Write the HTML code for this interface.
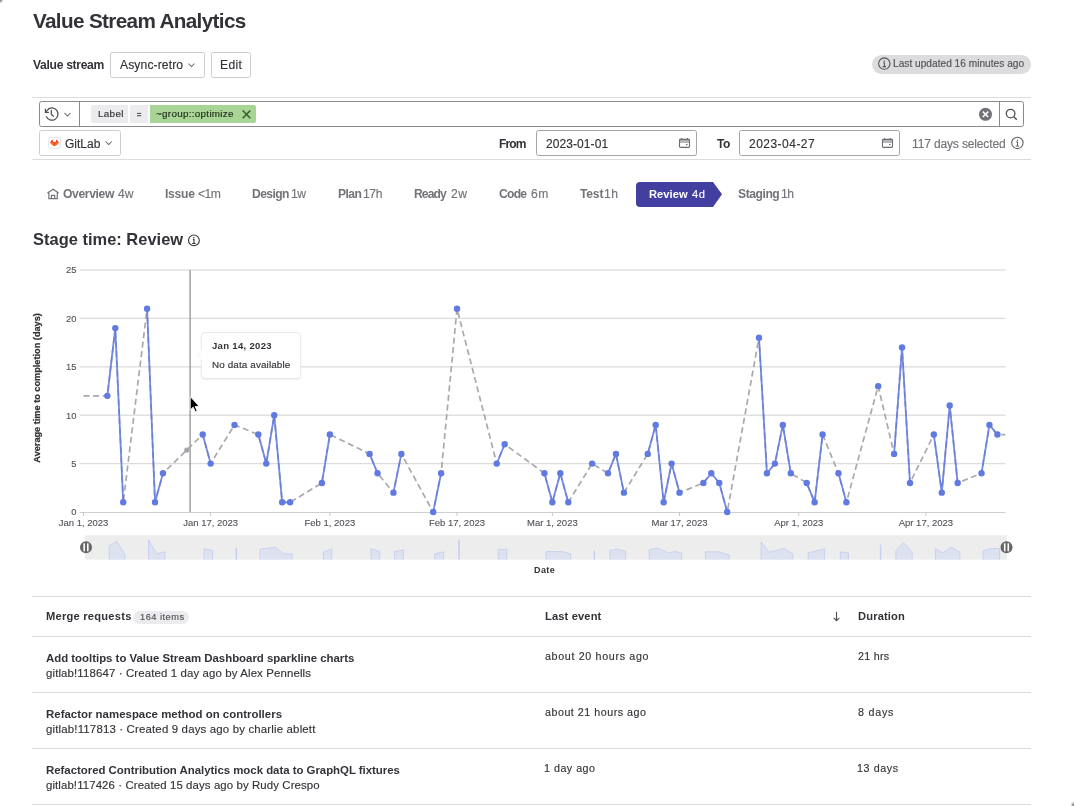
<!DOCTYPE html><html><head><meta charset="utf-8"><style>
html,body{margin:0;padding:0;background:#fff;width:1074px;height:806px;overflow:hidden;position:relative;font-family:'Liberation Sans', sans-serif}
.t{position:absolute;white-space:pre;line-height:1;will-change:transform;font-family:'Liberation Sans', sans-serif}
.r{-webkit-text-stroke:0.15px currentColor}
svg{position:absolute;overflow:visible;will-change:transform}
</style></head><body>
<div style="position:absolute;left:110px;top:52px;width:95px;height:26px;box-sizing:border-box;border:1px solid #cdcdd1;border-radius:2.5px;background:#fff"></div>
<div style="position:absolute;left:211px;top:52px;width:40px;height:26px;box-sizing:border-box;border:1px solid #cdcdd1;border-radius:2.5px;background:#fff"></div>
<div style="position:absolute;left:872px;top:55px;width:159px;height:19px;box-sizing:border-box;border-radius:10px;background:#dcdcde"></div>
<div style="position:absolute;left:32px;top:97px;width:999px;height:1px;box-sizing:border-box;background:#dcdcde"></div>
<div style="position:absolute;left:39px;top:101px;width:985px;height:26px;box-sizing:border-box;border:1px solid #89888d;border-radius:2.5px;background:#fff"></div>
<div style="position:absolute;left:79px;top:101px;width:1px;height:26px;box-sizing:border-box;background:#89888d"></div>
<div style="position:absolute;left:999px;top:101px;width:1px;height:26px;box-sizing:border-box;background:#89888d"></div>
<div style="position:absolute;left:91px;top:105px;width:37px;height:18px;box-sizing:border-box;background:#ececef;border-radius:2px 0 0 2px"></div>
<div style="position:absolute;left:130px;top:105px;width:18px;height:18px;box-sizing:border-box;background:#ececef"></div>
<div style="position:absolute;left:150px;top:105px;width:106px;height:18px;box-sizing:border-box;background:#a8d595;border-radius:0 2px 2px 0"></div>
<div style="position:absolute;left:39px;top:130px;width:82px;height:26px;box-sizing:border-box;border:1px solid #cdcdd1;border-radius:2.5px;background:#fff"></div>
<div style="position:absolute;left:536px;top:130px;width:161px;height:26px;box-sizing:border-box;border:1px solid #a4a3a8;border-radius:2.5px;background:#fff"></div>
<div style="position:absolute;left:739px;top:130px;width:161px;height:26px;box-sizing:border-box;border:1px solid #a4a3a8;border-radius:2.5px;background:#fff"></div>
<div style="position:absolute;left:32px;top:159px;width:999px;height:1px;box-sizing:border-box;background:#dcdcde"></div>
<svg style="left:0;top:0" width="1074" height="806"><path d="M640 182 H713 L722 194.3 L713 207 H640 Q636 207 636 203 V186 Q636 182 640 182 Z" fill="#433fa0"/></svg>
<div style="position:absolute;left:32px;top:596px;width:999px;height:1px;box-sizing:border-box;background:#dcdcde"></div>
<div style="position:absolute;left:32px;top:636px;width:999px;height:1px;box-sizing:border-box;background:#dcdcde"></div>
<div style="position:absolute;left:32px;top:692px;width:999px;height:1px;box-sizing:border-box;background:#dcdcde"></div>
<div style="position:absolute;left:32px;top:748px;width:999px;height:1px;box-sizing:border-box;background:#dcdcde"></div>
<div style="position:absolute;left:32px;top:804px;width:999px;height:1px;box-sizing:border-box;background:#dcdcde"></div>
<div style="position:absolute;left:133px;top:611px;width:56px;height:13px;box-sizing:border-box;border-radius:7px;background:#ececef"></div>
<svg style="left:0;top:0" width="1074" height="806" font-family="Liberation Sans, sans-serif">
<rect x="79.5" y="462.95" width="926" height="1.3" fill="#dcdcdd"/>
<rect x="79.5" y="414.55" width="926" height="1.3" fill="#dcdcdd"/>
<rect x="79.5" y="366.15" width="926" height="1.3" fill="#dcdcdd"/>
<rect x="79.5" y="317.75" width="926" height="1.3" fill="#dcdcdd"/>
<rect x="79.5" y="269.35" width="926" height="1.3" fill="#dcdcdd"/>
<rect x="79.5" y="512.00" width="926" height="1" fill="#cfcfd2"/>
<text x="76.5" y="515.40" font-size="9.4" fill="#535158" stroke="#535158" stroke-width="0.12" text-anchor="end">0</text>
<text x="76.5" y="467.00" font-size="9.4" fill="#535158" stroke="#535158" stroke-width="0.12" text-anchor="end">5</text>
<text x="76.5" y="418.60" font-size="9.4" fill="#535158" stroke="#535158" stroke-width="0.12" text-anchor="end">10</text>
<text x="76.5" y="370.20" font-size="9.4" fill="#535158" stroke="#535158" stroke-width="0.12" text-anchor="end">15</text>
<text x="76.5" y="321.80" font-size="9.4" fill="#535158" stroke="#535158" stroke-width="0.12" text-anchor="end">20</text>
<text x="76.5" y="273.40" font-size="9.4" fill="#535158" stroke="#535158" stroke-width="0.12" text-anchor="end">25</text>
<rect x="83.00" y="512" width="1" height="4" fill="#c9c9cc"/>
<text x="83.50" y="525.9" font-size="9.5" fill="#535158" stroke="#535158" stroke-width="0.12" text-anchor="middle">Jan 1, 2023</text>
<rect x="210.15" y="512" width="1" height="4" fill="#c9c9cc"/>
<text x="210.65" y="525.9" font-size="9.5" fill="#535158" stroke="#535158" stroke-width="0.12" text-anchor="middle">Jan 17, 2023</text>
<rect x="329.36" y="512" width="1" height="4" fill="#c9c9cc"/>
<text x="329.86" y="525.9" font-size="9.5" fill="#535158" stroke="#535158" stroke-width="0.12" text-anchor="middle">Feb 1, 2023</text>
<rect x="456.51" y="512" width="1" height="4" fill="#c9c9cc"/>
<text x="457.01" y="525.9" font-size="9.5" fill="#535158" stroke="#535158" stroke-width="0.12" text-anchor="middle">Feb 17, 2023</text>
<rect x="551.87" y="512" width="1" height="4" fill="#c9c9cc"/>
<text x="552.37" y="525.9" font-size="9.5" fill="#535158" stroke="#535158" stroke-width="0.12" text-anchor="middle">Mar 1, 2023</text>
<rect x="679.02" y="512" width="1" height="4" fill="#c9c9cc"/>
<text x="679.52" y="525.9" font-size="9.5" fill="#535158" stroke="#535158" stroke-width="0.12" text-anchor="middle">Mar 17, 2023</text>
<rect x="798.23" y="512" width="1" height="4" fill="#c9c9cc"/>
<text x="798.73" y="525.9" font-size="9.5" fill="#535158" stroke="#535158" stroke-width="0.12" text-anchor="middle">Apr 1, 2023</text>
<rect x="925.38" y="512" width="1" height="4" fill="#c9c9cc"/>
<text x="925.88" y="525.9" font-size="9.5" fill="#535158" stroke="#535158" stroke-width="0.12" text-anchor="middle">Apr 17, 2023</text>
<text transform="translate(40.2 387.9) rotate(-90)" font-size="9.2" font-weight="700" fill="#333238" stroke="#333238" stroke-width="0.25" text-anchor="middle" textLength="149.5" lengthAdjust="spacingAndGlyphs">Average time to completion (days)</text>
<rect x="189.5" y="270" width="1.2" height="242" fill="#89888d"/>
<polyline points="83.50,395.84 107.34,395.84 115.29,328.08 123.23,502.32 147.08,308.72 155.02,502.32 162.97,473.28 202.70,434.56 210.65,463.60 234.49,424.88 258.33,434.56 266.28,463.60 274.23,415.20 282.18,502.32 290.12,502.32 321.91,482.96 329.86,434.56 369.59,453.92 377.54,473.28 393.43,492.64 401.38,453.92 433.17,512.00 441.12,473.28 457.01,308.72 496.74,463.60 504.69,444.24 544.43,473.28 552.37,502.32 560.32,473.28 568.27,502.32 592.11,463.60 608.00,473.28 615.95,453.92 623.90,492.64 647.74,453.92 655.68,424.88 663.63,502.32 671.58,463.60 679.52,492.64 703.37,482.96 711.31,473.28 719.26,482.96 727.21,512.00 759.00,337.76 766.94,473.28 774.89,463.60 782.84,424.88 790.78,473.28 806.68,482.96 814.62,502.32 822.57,434.56 838.47,473.28 846.41,502.32 878.20,386.16 894.09,453.92 902.04,347.44 909.99,482.96 933.83,434.56 941.78,492.64 949.72,405.52 957.67,482.96 981.51,473.28 989.46,424.88 997.40,434.56 1005.35,434.56" fill="none" stroke="#a4a3a8" stroke-width="1.7" stroke-dasharray="6 3.6" stroke-opacity="0.95"/>
<polyline points="107.34,395.84 115.29,328.08 123.23,502.32" fill="none" stroke="#617ae2" stroke-width="1.8" stroke-linejoin="round" stroke-opacity="0.88"/>
<polyline points="147.08,308.72 155.02,502.32 162.97,473.28" fill="none" stroke="#617ae2" stroke-width="1.8" stroke-linejoin="round" stroke-opacity="0.88"/>
<polyline points="202.70,434.56 210.65,463.60" fill="none" stroke="#617ae2" stroke-width="1.8" stroke-linejoin="round" stroke-opacity="0.88"/>
<polyline points="258.33,434.56 266.28,463.60 274.23,415.20 282.18,502.32 290.12,502.32" fill="none" stroke="#617ae2" stroke-width="1.8" stroke-linejoin="round" stroke-opacity="0.88"/>
<polyline points="321.91,482.96 329.86,434.56" fill="none" stroke="#617ae2" stroke-width="1.8" stroke-linejoin="round" stroke-opacity="0.88"/>
<polyline points="369.59,453.92 377.54,473.28" fill="none" stroke="#617ae2" stroke-width="1.8" stroke-linejoin="round" stroke-opacity="0.88"/>
<polyline points="393.43,492.64 401.38,453.92" fill="none" stroke="#617ae2" stroke-width="1.8" stroke-linejoin="round" stroke-opacity="0.88"/>
<polyline points="433.17,512.00 441.12,473.28" fill="none" stroke="#617ae2" stroke-width="1.8" stroke-linejoin="round" stroke-opacity="0.88"/>
<polyline points="496.74,463.60 504.69,444.24" fill="none" stroke="#617ae2" stroke-width="1.8" stroke-linejoin="round" stroke-opacity="0.88"/>
<polyline points="544.43,473.28 552.37,502.32 560.32,473.28 568.27,502.32" fill="none" stroke="#617ae2" stroke-width="1.8" stroke-linejoin="round" stroke-opacity="0.88"/>
<polyline points="608.00,473.28 615.95,453.92 623.90,492.64" fill="none" stroke="#617ae2" stroke-width="1.8" stroke-linejoin="round" stroke-opacity="0.88"/>
<polyline points="647.74,453.92 655.68,424.88 663.63,502.32 671.58,463.60 679.52,492.64" fill="none" stroke="#617ae2" stroke-width="1.8" stroke-linejoin="round" stroke-opacity="0.88"/>
<polyline points="703.37,482.96 711.31,473.28 719.26,482.96 727.21,512.00" fill="none" stroke="#617ae2" stroke-width="1.8" stroke-linejoin="round" stroke-opacity="0.88"/>
<polyline points="759.00,337.76 766.94,473.28 774.89,463.60 782.84,424.88 790.78,473.28" fill="none" stroke="#617ae2" stroke-width="1.8" stroke-linejoin="round" stroke-opacity="0.88"/>
<polyline points="806.68,482.96 814.62,502.32 822.57,434.56" fill="none" stroke="#617ae2" stroke-width="1.8" stroke-linejoin="round" stroke-opacity="0.88"/>
<polyline points="838.47,473.28 846.41,502.32" fill="none" stroke="#617ae2" stroke-width="1.8" stroke-linejoin="round" stroke-opacity="0.88"/>
<polyline points="894.09,453.92 902.04,347.44 909.99,482.96" fill="none" stroke="#617ae2" stroke-width="1.8" stroke-linejoin="round" stroke-opacity="0.88"/>
<polyline points="933.83,434.56 941.78,492.64 949.72,405.52 957.67,482.96" fill="none" stroke="#617ae2" stroke-width="1.8" stroke-linejoin="round" stroke-opacity="0.88"/>
<polyline points="981.51,473.28 989.46,424.88 997.40,434.56" fill="none" stroke="#617ae2" stroke-width="1.8" stroke-linejoin="round" stroke-opacity="0.88"/>
<circle cx="107.34" cy="395.84" r="3.2" fill="#617ae2"/>
<circle cx="115.29" cy="328.08" r="3.2" fill="#617ae2"/>
<circle cx="123.23" cy="502.32" r="3.2" fill="#617ae2"/>
<circle cx="147.08" cy="308.72" r="3.2" fill="#617ae2"/>
<circle cx="155.02" cy="502.32" r="3.2" fill="#617ae2"/>
<circle cx="162.97" cy="473.28" r="3.2" fill="#617ae2"/>
<circle cx="202.70" cy="434.56" r="3.2" fill="#617ae2"/>
<circle cx="210.65" cy="463.60" r="3.2" fill="#617ae2"/>
<circle cx="234.49" cy="424.88" r="3.2" fill="#617ae2"/>
<circle cx="258.33" cy="434.56" r="3.2" fill="#617ae2"/>
<circle cx="266.28" cy="463.60" r="3.2" fill="#617ae2"/>
<circle cx="274.23" cy="415.20" r="3.2" fill="#617ae2"/>
<circle cx="282.18" cy="502.32" r="3.2" fill="#617ae2"/>
<circle cx="290.12" cy="502.32" r="3.2" fill="#617ae2"/>
<circle cx="321.91" cy="482.96" r="3.2" fill="#617ae2"/>
<circle cx="329.86" cy="434.56" r="3.2" fill="#617ae2"/>
<circle cx="369.59" cy="453.92" r="3.2" fill="#617ae2"/>
<circle cx="377.54" cy="473.28" r="3.2" fill="#617ae2"/>
<circle cx="393.43" cy="492.64" r="3.2" fill="#617ae2"/>
<circle cx="401.38" cy="453.92" r="3.2" fill="#617ae2"/>
<circle cx="433.17" cy="512.00" r="3.2" fill="#617ae2"/>
<circle cx="441.12" cy="473.28" r="3.2" fill="#617ae2"/>
<circle cx="457.01" cy="308.72" r="3.2" fill="#617ae2"/>
<circle cx="496.74" cy="463.60" r="3.2" fill="#617ae2"/>
<circle cx="504.69" cy="444.24" r="3.2" fill="#617ae2"/>
<circle cx="544.43" cy="473.28" r="3.2" fill="#617ae2"/>
<circle cx="552.37" cy="502.32" r="3.2" fill="#617ae2"/>
<circle cx="560.32" cy="473.28" r="3.2" fill="#617ae2"/>
<circle cx="568.27" cy="502.32" r="3.2" fill="#617ae2"/>
<circle cx="592.11" cy="463.60" r="3.2" fill="#617ae2"/>
<circle cx="608.00" cy="473.28" r="3.2" fill="#617ae2"/>
<circle cx="615.95" cy="453.92" r="3.2" fill="#617ae2"/>
<circle cx="623.90" cy="492.64" r="3.2" fill="#617ae2"/>
<circle cx="647.74" cy="453.92" r="3.2" fill="#617ae2"/>
<circle cx="655.68" cy="424.88" r="3.2" fill="#617ae2"/>
<circle cx="663.63" cy="502.32" r="3.2" fill="#617ae2"/>
<circle cx="671.58" cy="463.60" r="3.2" fill="#617ae2"/>
<circle cx="679.52" cy="492.64" r="3.2" fill="#617ae2"/>
<circle cx="703.37" cy="482.96" r="3.2" fill="#617ae2"/>
<circle cx="711.31" cy="473.28" r="3.2" fill="#617ae2"/>
<circle cx="719.26" cy="482.96" r="3.2" fill="#617ae2"/>
<circle cx="727.21" cy="512.00" r="3.2" fill="#617ae2"/>
<circle cx="759.00" cy="337.76" r="3.2" fill="#617ae2"/>
<circle cx="766.94" cy="473.28" r="3.2" fill="#617ae2"/>
<circle cx="774.89" cy="463.60" r="3.2" fill="#617ae2"/>
<circle cx="782.84" cy="424.88" r="3.2" fill="#617ae2"/>
<circle cx="790.78" cy="473.28" r="3.2" fill="#617ae2"/>
<circle cx="806.68" cy="482.96" r="3.2" fill="#617ae2"/>
<circle cx="814.62" cy="502.32" r="3.2" fill="#617ae2"/>
<circle cx="822.57" cy="434.56" r="3.2" fill="#617ae2"/>
<circle cx="838.47" cy="473.28" r="3.2" fill="#617ae2"/>
<circle cx="846.41" cy="502.32" r="3.2" fill="#617ae2"/>
<circle cx="878.20" cy="386.16" r="3.2" fill="#617ae2"/>
<circle cx="894.09" cy="453.92" r="3.2" fill="#617ae2"/>
<circle cx="902.04" cy="347.44" r="3.2" fill="#617ae2"/>
<circle cx="909.99" cy="482.96" r="3.2" fill="#617ae2"/>
<circle cx="933.83" cy="434.56" r="3.2" fill="#617ae2"/>
<circle cx="941.78" cy="492.64" r="3.2" fill="#617ae2"/>
<circle cx="949.72" cy="405.52" r="3.2" fill="#617ae2"/>
<circle cx="957.67" cy="482.96" r="3.2" fill="#617ae2"/>
<circle cx="981.51" cy="473.28" r="3.2" fill="#617ae2"/>
<circle cx="989.46" cy="424.88" r="3.2" fill="#617ae2"/>
<circle cx="997.40" cy="434.56" r="3.2" fill="#617ae2"/>
<circle cx="186.81" cy="450.05" r="2.6" fill="#a4a3a8"/>
<rect x="85" y="535.3" width="922" height="24.3" fill="#ededee"/>
<path d="M109.2,559.6 L109.2,545.9 L116.7,541.2 L125.0,554.2 L125.0,559.6 Z" fill="#dde2f1"/>
<path d="M109.2,559.6 L109.2,545.9 L116.7,541.2 L125.0,554.2 L125.0,559.6" fill="none" stroke="#c3ccef" stroke-width="0.8"/>
<path d="M148.5,559.6 L148.5,539.8 L156.9,553.8 L164.9,551.8 L164.9,559.6 Z" fill="#dde2f1"/>
<path d="M148.5,559.6 L148.5,539.8 L156.9,553.8 L164.9,551.8 L164.9,559.6" fill="none" stroke="#c3ccef" stroke-width="0.8"/>
<path d="M204.0,559.6 L204.0,548.8 L212.6,550.3 L212.6,559.6 Z" fill="#dde2f1"/>
<path d="M204.0,559.6 L204.0,548.8 L212.6,550.3 L212.6,559.6" fill="none" stroke="#c3ccef" stroke-width="0.8"/>
<path d="M236.1,559.6 L236.1,547.9 L236.6,547.9 L236.6,559.6 Z" fill="#dde2f1"/>
<path d="M236.1,559.6 L236.1,547.9 L236.6,547.9 L236.6,559.6" fill="none" stroke="#c3ccef" stroke-width="0.8"/>
<path d="M260.0,559.6 L260.0,549.0 L275.2,547.3 L284.1,553.8 L292.2,553.8 L292.2,559.6 Z" fill="#dde2f1"/>
<path d="M260.0,559.6 L260.0,549.0 L275.2,547.3 L284.1,553.8 L292.2,553.8 L292.2,559.6" fill="none" stroke="#c3ccef" stroke-width="0.8"/>
<path d="M323.4,559.6 L323.4,552.3 L331.8,548.8 L331.8,559.6 Z" fill="#dde2f1"/>
<path d="M323.4,559.6 L323.4,552.3 L331.8,548.8 L331.8,559.6" fill="none" stroke="#c3ccef" stroke-width="0.8"/>
<path d="M371.1,559.6 L371.1,548.8 L379.8,551.5 L379.8,559.6 Z" fill="#dde2f1"/>
<path d="M371.1,559.6 L371.1,548.8 L379.8,551.5 L379.8,559.6" fill="none" stroke="#c3ccef" stroke-width="0.8"/>
<path d="M394.5,559.6 L394.5,551.5 L403.4,550.0 L403.4,559.6 Z" fill="#dde2f1"/>
<path d="M394.5,559.6 L394.5,551.5 L403.4,550.0 L403.4,559.6" fill="none" stroke="#c3ccef" stroke-width="0.8"/>
<path d="M434.7,559.6 L434.7,553.8 L443.6,551.8 L443.6,559.6 Z" fill="#dde2f1"/>
<path d="M434.7,559.6 L434.7,553.8 L443.6,551.8 L443.6,559.6" fill="none" stroke="#c3ccef" stroke-width="0.8"/>
<path d="M458.8,559.6 L458.8,539.8 L459.3,539.8 L459.3,559.6 Z" fill="#dde2f1"/>
<path d="M458.8,559.6 L458.8,539.8 L459.3,539.8 L459.3,559.6" fill="none" stroke="#c3ccef" stroke-width="0.8"/>
<path d="M498.2,559.6 L498.2,549.9 L506.8,549.0 L506.8,559.6 Z" fill="#dde2f1"/>
<path d="M498.2,559.6 L498.2,549.9 L506.8,549.0 L506.8,559.6" fill="none" stroke="#c3ccef" stroke-width="0.8"/>
<path d="M546.1,559.6 L546.1,551.5 L561.3,551.5 L570.6,553.8 L570.6,559.6 Z" fill="#dde2f1"/>
<path d="M546.1,559.6 L546.1,551.5 L561.3,551.5 L570.6,553.8 L570.6,559.6" fill="none" stroke="#c3ccef" stroke-width="0.8"/>
<path d="M594.1,559.6 L594.1,551.0 L594.6,551.0 L594.6,559.6 Z" fill="#dde2f1"/>
<path d="M594.1,559.6 L594.1,551.0 L594.6,551.0 L594.6,559.6" fill="none" stroke="#c3ccef" stroke-width="0.8"/>
<path d="M609.9,559.6 L609.9,550.3 L617.4,549.0 L625.7,551.5 L625.7,559.6 Z" fill="#dde2f1"/>
<path d="M609.9,559.6 L609.9,550.3 L617.4,549.0 L625.7,551.5 L625.7,559.6" fill="none" stroke="#c3ccef" stroke-width="0.8"/>
<path d="M649.2,559.6 L649.2,549.9 L657.3,547.9 L668.6,553.0 L674.6,551.5 L681.7,553.0 L681.7,559.6 Z" fill="#dde2f1"/>
<path d="M649.2,559.6 L649.2,549.9 L657.3,547.9 L668.6,553.0 L674.6,551.5 L681.7,553.0 L681.7,559.6" fill="none" stroke="#c3ccef" stroke-width="0.8"/>
<path d="M705.4,559.6 L705.4,551.8 L719.4,551.8 L729.2,555.3 L729.2,559.6 Z" fill="#dde2f1"/>
<path d="M705.4,559.6 L705.4,551.8 L719.4,551.8 L729.2,555.3 L729.2,559.6" fill="none" stroke="#c3ccef" stroke-width="0.8"/>
<path d="M761.1,559.6 L761.1,541.9 L769.1,552.3 L784.3,548.5 L792.7,553.8 L792.7,559.6 Z" fill="#dde2f1"/>
<path d="M761.1,559.6 L761.1,541.9 L769.1,552.3 L784.3,548.5 L792.7,553.8 L792.7,559.6" fill="none" stroke="#c3ccef" stroke-width="0.8"/>
<path d="M808.2,559.6 L808.2,552.9 L824.6,548.8 L824.6,559.6 Z" fill="#dde2f1"/>
<path d="M808.2,559.6 L808.2,552.9 L824.6,548.8 L824.6,559.6" fill="none" stroke="#c3ccef" stroke-width="0.8"/>
<path d="M840.3,559.6 L840.3,551.8 L848.4,553.0 L848.4,559.6 Z" fill="#dde2f1"/>
<path d="M840.3,559.6 L840.3,551.8 L848.4,553.0 L848.4,559.6" fill="none" stroke="#c3ccef" stroke-width="0.8"/>
<path d="M880.3,559.6 L880.3,544.9 L880.8,544.9 L880.8,559.6 Z" fill="#dde2f1"/>
<path d="M880.3,559.6 L880.3,544.9 L880.8,544.9 L880.8,559.6" fill="none" stroke="#c3ccef" stroke-width="0.8"/>
<path d="M895.8,559.6 L895.8,550.9 L903.5,542.5 L912.2,552.3 L912.2,559.6 Z" fill="#dde2f1"/>
<path d="M895.8,559.6 L895.8,550.9 L903.5,542.5 L912.2,552.3 L912.2,559.6" fill="none" stroke="#c3ccef" stroke-width="0.8"/>
<path d="M935.4,559.6 L935.4,548.8 L942.8,553.0 L951.2,547.0 L959.8,552.3 L959.8,559.6 Z" fill="#dde2f1"/>
<path d="M935.4,559.6 L935.4,548.8 L942.8,553.0 L951.2,547.0 L959.8,552.3 L959.8,559.6" fill="none" stroke="#c3ccef" stroke-width="0.8"/>
<path d="M983.1,559.6 L983.1,550.9 L991.4,548.5 L999.5,548.5 L999.5,559.6 Z" fill="#dde2f1"/>
<path d="M983.1,559.6 L983.1,550.9 L991.4,548.5 L999.5,548.5 L999.5,559.6" fill="none" stroke="#c3ccef" stroke-width="0.8"/>
<circle cx="86.0" cy="547.3" r="6" fill="#666"/><rect x="83.4" y="543.3" width="1.6" height="8" fill="#fff"/><rect x="87.0" y="543.3" width="1.6" height="8" fill="#fff"/>
<circle cx="1006.5" cy="547.3" r="6" fill="#666"/><rect x="1003.9" y="543.3" width="1.6" height="8" fill="#fff"/><rect x="1007.5" y="543.3" width="1.6" height="8" fill="#fff"/>
</svg>
<div style="position:absolute;left:201px;top:332px;width:100px;height:47px;box-sizing:border-box;border:1px solid #e9e9ec;border-radius:4px;background:#fff;box-shadow:0 1px 1.5px rgba(0,0,0,0.07)"></div>
<div class="t" style="left:32.60px;top:10.86px;font-size:20.71px;letter-spacing:-0.657px;font-weight:700;color:#333238">Value Stream Analytics</div>
<div class="t" style="left:33.30px;top:59.32px;font-size:12.14px;letter-spacing:-0.318px;font-weight:700;color:#333238">Value stream</div>
<div class="t r" style="left:120.00px;top:59.32px;font-size:12.14px;letter-spacing:0.110px;color:#333238">Async-retro</div>
<div class="t r" style="left:220.20px;top:59.32px;font-size:12.14px;letter-spacing:0.300px;color:#333238">Edit</div>
<div class="t r" style="left:893.40px;top:59.01px;font-size:10.14px;letter-spacing:0.019px;color:#535158">Last updated 16 minutes ago</div>
<div class="t r" style="left:97.50px;top:109.15px;font-size:9.86px;letter-spacing:0.325px;color:#333238">Label</div>
<div class="t r" style="left:156.40px;top:109.15px;font-size:9.86px;letter-spacing:0.300px;color:#1f2b1c">~group::optimize</div>
<div class="t r" style="left:64.60px;top:137.64px;font-size:12.00px;letter-spacing:0.000px;color:#333238">GitLab</div>
<div class="t" style="left:498.90px;top:137.64px;font-size:12.00px;letter-spacing:-0.867px;font-weight:700;color:#333238">From</div>
<div class="t r" style="left:545.90px;top:137.64px;font-size:12.00px;letter-spacing:0.078px;color:#333238">2023-01-01</div>
<div class="t" style="left:716.50px;top:137.64px;font-size:12.00px;letter-spacing:-0.400px;font-weight:700;color:#333238">To</div>
<div class="t r" style="left:749.00px;top:137.64px;font-size:12.00px;letter-spacing:0.478px;color:#333238">2023-04-27</div>
<div class="t r" style="left:911.70px;top:137.64px;font-size:12.00px;letter-spacing:-0.138px;color:#737278">117 days selected</div>
<div class="t" style="left:62.80px;top:188.12px;font-size:12.14px;letter-spacing:-0.357px;font-weight:700;color:#737278">Overview</div>
<div class="t r" style="left:117.80px;top:188.12px;font-size:12.14px;letter-spacing:-0.100px;color:#737278">4w</div>
<div class="t" style="left:164.60px;top:188.12px;font-size:12.14px;letter-spacing:-0.275px;font-weight:700;color:#737278">Issue</div>
<div class="t r" style="left:198.00px;top:188.12px;font-size:12.14px;letter-spacing:-0.500px;color:#737278">&lt;1m</div>
<div class="t" style="left:251.60px;top:188.12px;font-size:12.14px;letter-spacing:-0.600px;font-weight:700;color:#737278">Design</div>
<div class="t r" style="left:290.65px;top:188.12px;font-size:12.14px;letter-spacing:-0.500px;color:#737278">1w</div>
<div class="t" style="left:337.90px;top:188.12px;font-size:12.14px;letter-spacing:-0.567px;font-weight:700;color:#737278">Plan</div>
<div class="t r" style="left:363.00px;top:188.12px;font-size:12.14px;letter-spacing:-0.400px;color:#737278">17h</div>
<div class="t" style="left:414.30px;top:188.12px;font-size:12.14px;letter-spacing:-0.900px;font-weight:700;color:#737278">Ready</div>
<div class="t r" style="left:450.70px;top:188.12px;font-size:12.14px;letter-spacing:0.400px;color:#737278">2w</div>
<div class="t" style="left:499.40px;top:188.12px;font-size:12.14px;letter-spacing:-0.733px;font-weight:700;color:#737278">Code</div>
<div class="t r" style="left:531.10px;top:188.12px;font-size:12.14px;letter-spacing:0.500px;color:#737278">6m</div>
<div class="t" style="left:579.80px;top:188.12px;font-size:12.14px;letter-spacing:-0.200px;font-weight:700;color:#737278">Test</div>
<div class="t r" style="left:604.10px;top:188.12px;font-size:12.14px;letter-spacing:0.400px;color:#737278">1h</div>
<div class="t" style="left:737.70px;top:188.12px;font-size:12.14px;letter-spacing:-0.450px;font-weight:700;color:#737278">Staging</div>
<div class="t r" style="left:781.40px;top:188.12px;font-size:12.14px;letter-spacing:-0.500px;color:#737278">1h</div>
<div class="t" style="left:649.20px;top:188.77px;font-size:11.14px;letter-spacing:0.060px;font-weight:700;color:#ffffff">Review</div>
<div class="t r" style="left:692.15px;top:188.77px;font-size:11.14px;letter-spacing:0.500px;color:#ffffff">4d</div>
<div class="t" style="left:33.00px;top:231.09px;font-size:16.43px;letter-spacing:0.024px;font-weight:700;color:#333238">Stage time: Review</div>
<div class="t" style="left:212.00px;top:341.20px;font-size:9.57px;letter-spacing:0.291px;font-weight:700;color:#333238">Jan 14, 2023</div>
<div class="t r" style="left:212.00px;top:359.95px;font-size:9.86px;letter-spacing:0.137px;color:#333238">No data available</div>
<div class="t" style="left:534.30px;top:566.08px;font-size:9.00px;letter-spacing:0.433px;font-weight:700;color:#333238">Date</div>
<div class="t" style="left:45.50px;top:611.07px;font-size:11.14px;letter-spacing:0.238px;font-weight:700;color:#333238">Merge requests</div>
<div class="t r" style="left:139.90px;top:612.54px;font-size:9.29px;letter-spacing:0.475px;color:#535158">164 items</div>
<div class="t" style="left:544.80px;top:611.17px;font-size:11.14px;letter-spacing:0.144px;font-weight:700;color:#333238">Last event</div>
<div class="t" style="left:857.80px;top:611.17px;font-size:11.14px;letter-spacing:0.157px;font-weight:700;color:#333238">Duration</div>
<div class="t" style="left:45.50px;top:652.82px;font-size:11.43px;letter-spacing:-0.013px;font-weight:700;color:#333238">Add tooltips to Value Stream Dashboard sparkline charts</div>
<div class="t r" style="left:45.50px;top:667.82px;font-size:11.43px;letter-spacing:0.124px;color:#333238">gitlab!118647 · Created 1 day ago by Alex Pennells</div>
<div class="t r" style="left:544.80px;top:651.43px;font-size:10.71px;letter-spacing:0.665px;color:#333238">about 20 hours ago</div>
<div class="t r" style="left:857.80px;top:651.43px;font-size:10.71px;letter-spacing:0.280px;color:#333238">21 hrs</div>
<div class="t" style="left:45.50px;top:708.82px;font-size:11.43px;letter-spacing:0.013px;font-weight:700;color:#333238">Refactor namespace method on controllers</div>
<div class="t r" style="left:45.50px;top:723.82px;font-size:11.43px;letter-spacing:0.169px;color:#333238">gitlab!117813 · Created 9 days ago by charlie ablett</div>
<div class="t r" style="left:544.80px;top:707.43px;font-size:10.71px;letter-spacing:0.512px;color:#333238">about 21 hours ago</div>
<div class="t r" style="left:857.80px;top:707.43px;font-size:10.71px;letter-spacing:0.780px;color:#333238">8 days</div>
<div class="t" style="left:45.50px;top:764.82px;font-size:11.43px;letter-spacing:-0.024px;font-weight:700;color:#333238">Refactored Contribution Analytics mock data to GraphQL fixtures</div>
<div class="t r" style="left:45.50px;top:779.82px;font-size:11.43px;letter-spacing:0.094px;color:#333238">gitlab!117426 · Created 15 days ago by Rudy Crespo</div>
<div class="t r" style="left:543.80px;top:763.43px;font-size:10.71px;letter-spacing:0.500px;color:#333238">1 day ago</div>
<div class="t r" style="left:856.80px;top:763.43px;font-size:10.71px;letter-spacing:0.583px;color:#333238">13 days</div>
<svg style="left:0;top:0" width="1074" height="806">
<path d="M188.5 63.5 l3 3 l3 -3" fill="none" stroke="#626168" stroke-width="1.05"/>
<path d="M64.5 113.0 l3 3 l3 -3" fill="none" stroke="#626168" stroke-width="1.05"/>
<path d="M105.7 141.5 l3 3 l3 -3" fill="none" stroke="#626168" stroke-width="1.05"/>
<g fill="none" stroke="#535158" stroke-width="1.25" stroke-linecap="round"><path d="M46.4 116.7 A6.1 6.1 0 1 0 48.4 109.1"/><path d="M45.4 109.2 V112.3 H48.5"/><path d="M45.6 112.1 L48.4 109.3"/><path d="M51.3 110.3 V114.3 L53.4 116.3"/></g>
<path d="M242.7 110.6 l7.6 7.6 M250.3 110.6 l-7.6 7.6" stroke="#2d5a26" stroke-width="1.45"/>
<rect x="137" y="112.9" width="4.2" height="0.9" fill="#333238"/><rect x="137" y="115.3" width="4.2" height="0.9" fill="#333238"/>
<circle cx="985.5" cy="114.3" r="6.5" fill="#737278"/><path d="M982.8 111.6 l5.4 5.4 M988.2 111.6 l-5.4 5.4" stroke="#fff" stroke-width="1.5"/>
<circle cx="1010.6" cy="113.6" r="4.3" fill="none" stroke="#535158" stroke-width="1.3"/><path d="M1013.8 116.8 L1016.8 119.8" stroke="#535158" stroke-width="1.4"/>
<g transform="translate(684.4 143.3)"><rect x="-4.6" y="-3.4" width="9.3" height="3" fill="#b4b3b8"/><rect x="-4.9" y="-3.9" width="10" height="8" rx="0.8" fill="none" stroke="#6d6c72" stroke-width="1.1"/><path d="M-2.8 -5.3 V-3.8 M2.9 -5.3 V-3.8" stroke="#6d6c72" stroke-width="1.1"/><rect x="1.6" y="0.6" width="1.5" height="1.2" fill="#6d6c72"/></g>
<g transform="translate(887.4 143.3)"><rect x="-4.6" y="-3.4" width="9.3" height="3" fill="#b4b3b8"/><rect x="-4.9" y="-3.9" width="10" height="8" rx="0.8" fill="none" stroke="#6d6c72" stroke-width="1.1"/><path d="M-2.8 -5.3 V-3.8 M2.9 -5.3 V-3.8" stroke="#6d6c72" stroke-width="1.1"/><rect x="1.6" y="0.6" width="1.5" height="1.2" fill="#6d6c72"/></g>
<circle cx="884.3" cy="63.6" r="5.7" fill="none" stroke="#535158" stroke-width="1.1"/><circle cx="884.30" cy="61.00" r="0.75" fill="#535158"/><path d="M883.3 62.8 h1.1 v3.8 M882.6 66.6 h3.4" fill="none" stroke="#535158" stroke-width="1.05"/>
<circle cx="1017.4" cy="142.9" r="5.7" fill="none" stroke="#626168" stroke-width="1.1"/><circle cx="1017.40" cy="140.30" r="0.75" fill="#626168"/><path d="M1016.4 142.1 h1.1 v3.8 M1015.7 145.9 h3.4" fill="none" stroke="#626168" stroke-width="1.05"/>
<circle cx="193.9" cy="240.4" r="5.4" fill="none" stroke="#333238" stroke-width="1.1"/><circle cx="193.90" cy="237.80" r="0.75" fill="#333238"/><path d="M192.9 239.6 h1.1 v3.8 M192.2 243.4 h3.4" fill="none" stroke="#333238" stroke-width="1.05"/>
<g transform="translate(53 194)" fill="none" stroke="#737278" stroke-width="1.2"><path d="M-5.6 -0.9 L0.1 -4.7 L5.6 -0.9 M-4.1 -1.9 V4.6 H4.3 V-1.9 M-1.5 4.6 V1.4 H1.7 V4.6"/></g>
<rect x="48.7" y="137.6" width="11.8" height="10.7" rx="1.5" fill="#fff" stroke="#e4e4e7" stroke-width="1"/>
<path d="M50 142.6 L52.3 139.2 L53.3 141.9 H55.7 L56.6 139.2 L58.9 142.6 L54.5 146.2 Z" fill="#e24329"/><path d="M50 142.6 L51.5 144.4 L54.5 146.2 L53.3 141.9 Z" fill="#fc6d26"/><path d="M58.9 142.6 L57.5 144.4 L54.5 146.2 L55.7 141.9 Z" fill="#fc6d26"/>
<path d="M836.5 611.8 V620.6 M833.7 617.9 L836.5 620.7 L839.3 617.9" fill="none" stroke="#535158" stroke-width="1.15"/>
<path d="M201.5 351 L197.5 355 L201.5 359 Z" fill="#fff" stroke="#ececef" stroke-width="0.8"/><rect x="201.2" y="350" width="1.6" height="10" fill="#fff"/>
<path d="M190.2 396.5 L190.2 410 L193.2 407.2 L195.3 411.8 L197.2 411 L195.2 406.5 L199.2 406.3 Z" fill="#000" stroke="#fff" stroke-width="0.9"/>
</svg>
<div style="position:absolute;left:-2px;top:-2px;width:4px;height:4px;border-radius:2px;background:#555;filter:blur(0.8px)"></div>
<div style="position:absolute;left:1072px;top:803px;width:4px;height:4px;border-radius:2px;background:#555;filter:blur(0.8px)"></div>
</body></html>
